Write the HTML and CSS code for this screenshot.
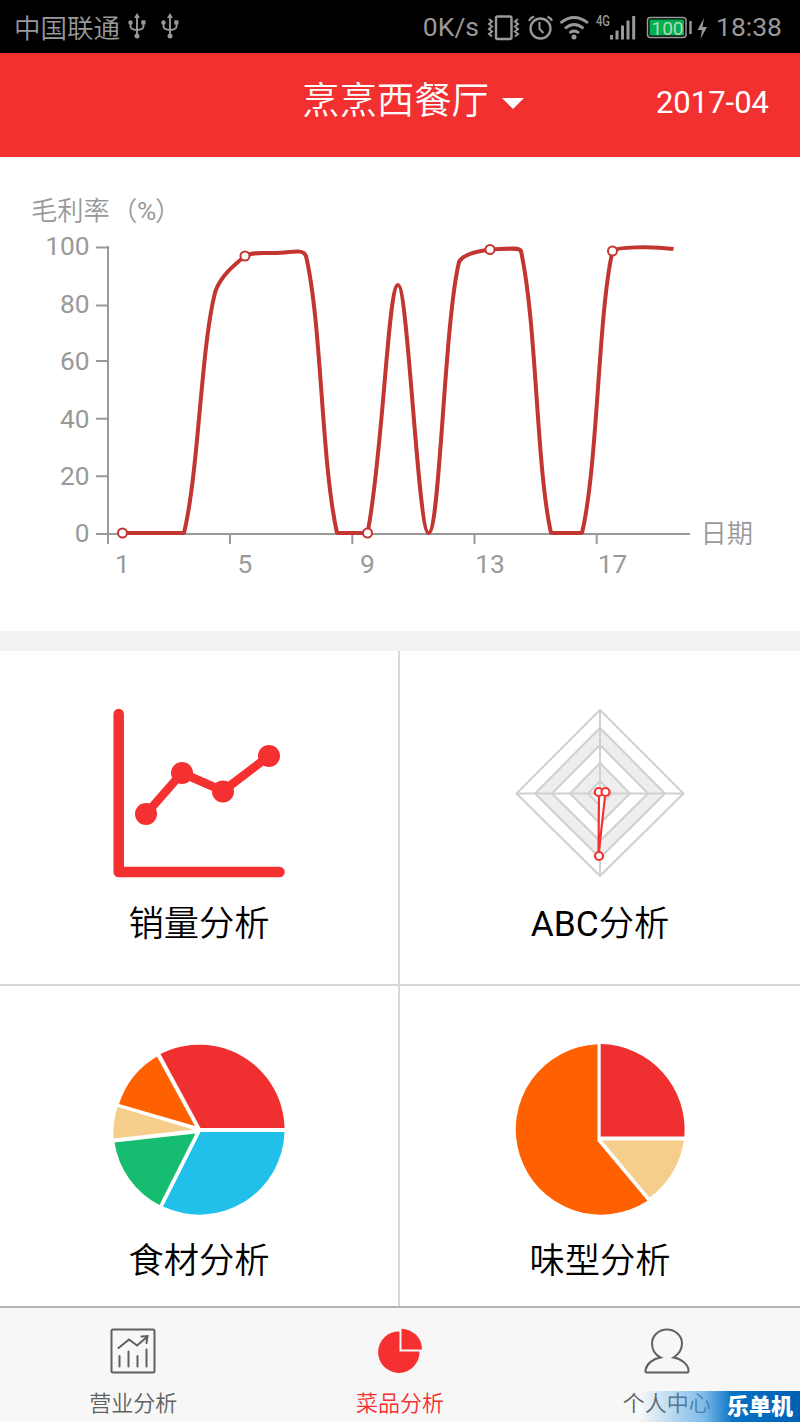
FILE: index.html
```html
<!DOCTYPE html>
<html lang="zh-CN">
<head>
<meta charset="UTF-8">
<meta name="viewport" content="width=device-width, initial-scale=1.0">
<title>菜品分析</title>
<link rel="stylesheet" href="styles.css">
</head>
<body>

<div class="status-bar">
    <span class="carrier">中国联通</span>
    <svg class="usb" width="18" height="27" viewBox="0 0 18 27">
        <path d="M9 3v21M2.500 10v3.500q0 3 6.500 3.500q6.500-.5 6.500-3.500V10" fill="none" stroke="#999" stroke-width="1.900"/>
        <path d="M9 0l3 5H6z" fill="#999"/>
        <circle cx="2.500" cy="9.500" r="2.200" fill="#999"/>
        <rect x="13.300" y="7.300" width="4.200" height="4.200" fill="#999"/>
        <circle cx="9" cy="23" r="2.500" fill="#999"/>
    </svg>
    <svg class="usb second" width="18" height="27" viewBox="0 0 18 27">
        <path d="M9 3v21M2.500 10v3.500q0 3 6.500 3.500q6.500-.5 6.500-3.500V10" fill="none" stroke="#999" stroke-width="1.900"/>
        <path d="M9 0l3 5H6z" fill="#999"/>
        <circle cx="2.500" cy="9.500" r="2.200" fill="#999"/>
        <rect x="13.300" y="7.300" width="4.200" height="4.200" fill="#999"/>
        <circle cx="9" cy="23" r="2.500" fill="#999"/>
    </svg>
    <span class="speed latin">0K/s</span>
    <svg class="status-icons" width="224" height="32" viewBox="488 10 224 32">
        <g fill="none" stroke="#999" stroke-width="2">
            <!-- vibrate -->
            <rect x="498" y="15.500" width="15.500" height="22.500" rx="1.500" stroke-width="2.400"/>
            <path d="M491 18l3 2.500-3 2.500 3 2.500-3 2.500 3 2.500-3 2.500 3 2.500M520 18l-3 2.500 3 2.500-3 2.500 3 2.500-3 2.500 3 2.500-3 2.500"/>
            <!-- alarm -->
            <circle cx="542.500" cy="27.500" r="10" stroke-width="2.300"/>
            <path d="M541.500 21v7l4 4M531 20q1-3 5-4.500M549.500 15.500q3.500 1.500 4.500 4.500"/>
            <!-- wifi -->
            <path d="M562.500 22q13.500-11 27.500 0M567 27.500q9-8 18.500 0M571.500 32q4.500-4 9.500 0" stroke-width="2.800"/>
            <!-- signal -->
            <path d="M613.500 34v4.500M619 29.500v9M624.500 24.500v14M630 19.500v19M635.700 15v23.500" stroke-width="3"/>
            <rect x="649.500" y="16.500" width="38.500" height="20" rx="3" stroke-width="1.500"/>
            <path d="M692.500 20v13" stroke-width="2.400"/>
        </g>
        <circle cx="576" cy="36" r="2.500" fill="#999"/>
        <rect x="651.500" y="18.500" width="34.500" height="16" rx="1" fill="#00b050"/>
        <path d="M706 17l-6.500 12h4.500l-1.500 9 6.500-12h-4.500z" fill="#999"/>
        <text class="net-text" x="598" y="25" textLength="14" lengthAdjust="spacingAndGlyphs">4G</text>
        <text class="battery-text" x="669.500" y="34" text-anchor="middle">100</text>
    </svg>
    <span class="time latin">18:38</span>
</div>

<div class="header">
    <div class="shop">烹烹西餐厅<span class="arrow"></span></div>
    <div class="month latin">2017-04</div>
</div>

<div class="chart">
    <svg width="800" height="474" viewBox="0 157 800 474">
        <g class="axis">
            <path d="M108 246v298M96 534h594"/>
            <path d="M96 247.500h12M96 305.500h12M96 361h12M96 418.700h12M96 476.300h12"/>
            <path d="M230 534v10M352.300 534v10M474.500 534v10M596.700 534v10"/>
        </g>
        <g class="axis-text">
            <text x="31" y="220">毛利率<tspan x="111">（</tspan><tspan class="latin" x="137">%</tspan><tspan x="155">）</tspan></text>
            <text x="700.500" y="542.500">日期</text>
        </g>
        <g class="axis-text latin" text-anchor="end">
            <text x="89.500" y="255">100</text>
            <text x="89.500" y="312.500">80</text>
            <text x="89.500" y="370">60</text>
            <text x="89.500" y="427.500">40</text>
            <text x="89.500" y="485">20</text>
            <text x="89.500" y="542">0</text>
        </g>
        <g class="axis-text latin" text-anchor="middle">
            <text x="122.500" y="573">1</text>
            <text x="245" y="573">5</text>
            <text x="367.500" y="573">9</text>
            <text x="490" y="573">13</text>
            <text x="612.500" y="573">17</text>
        </g>
        <path class="line" d="M122.500 533H184C199 470 201 345 215.500 291C221 276 233 266 245 256C251 252 260 253.500 275.500 253C291 253 303 248 306 256C322 325 321 460 337 533H367.500C383 455 388 285 398 285C408 285 418 533 428.500 533C440 533 444 325 459 262C463 254 478 251 490 249.500C505 249 519 247 521 251C537 325 536 465 551 533H582C598 465 598 315 612.500 251C617 247 650 246 673.500 249"/>
        <g class="dots">
            <circle cx="122.500" cy="533" r="4.500"/>
            <circle cx="245" cy="256" r="4.500"/>
            <circle cx="367.500" cy="533" r="4.500"/>
            <circle cx="490" cy="249.500" r="4.500"/>
            <circle cx="612.500" cy="251" r="4.500"/>
        </g>
    </svg>
</div>

<div class="menu">
    <div class="item">
        <svg width="176" height="176" viewBox="111 705 176 176">
            <path d="M118.700 714v158H279.500" fill="none" stroke="#f53030" stroke-width="10.500" stroke-linecap="round" stroke-linejoin="round"/>
            <path d="M146 814l36-41 41 18 46-35" fill="none" stroke="#f53030" stroke-width="8.500"/>
            <g fill="#f53030">
                <circle cx="146" cy="814" r="11"/>
                <circle cx="182" cy="773" r="11"/>
                <circle cx="223" cy="791.500" r="11"/>
                <circle cx="269" cy="756" r="11"/>
            </g>
        </svg>
        <p>销量分析</p>
    </div>
    <div class="item">
        <svg width="176" height="176" viewBox="512 705 176 176">
            <g stroke="#d0d0d0" stroke-width="2">
                <path d="M600 710l83.500 83.500L600 876l-83.500-82.500z" fill="#fff"/>
                <path d="M600 728l65 65.500-65 64.500-65-64.500z" fill="#eee"/>
                <path d="M600 745l48 48.500-48 47.500-48-47.500z" fill="#fff"/>
                <path d="M600 763l30 30.500-30 30-30-30z" fill="#eee"/>
                <path d="M600 781l12 12.500-12 12-12-12z" fill="#fff"/>
                <path d="M600 710v166M516.500 793.500h167"/>
            </g>
            <g fill="#fff" stroke="#f53030" stroke-width="2.200">
                <path d="M599 792l-.5 63.500L605.500 792"/>
                <circle cx="598.700" cy="792" r="4"/>
                <circle cx="605.500" cy="792" r="4"/>
                <circle cx="599" cy="856" r="4"/>
            </g>
        </svg>
        <p><span class="latin">ABC</span>分析</p>
    </div>
    <div class="item">
        <svg width="176" height="176" viewBox="111 1042 176 176">
            <path d="M200.500 1128H284.500A85.200 85.200 0 0 0 160.500 1054z" fill="#f03030"/>
            <path d="M195 1126L119 1104A86 86 0 0 1 157 1056.500z" fill="#ff6000"/>
            <path d="M193 1129.500L117.500 1107A88 88 0 0 0 113.500 1138.500z" fill="#f6ce8c"/>
            <path d="M195.500 1133.500L114.500 1142.500A85 85 0 0 0 159.500 1205z" fill="#16bc70"/>
            <path d="M200.500 1132H284.500A85.200 85.200 0 0 1 163 1206.500z" fill="#20c0ea"/>
        </svg>
        <p>食材分析</p>
    </div>
    <div class="item">
        <svg width="176" height="176" viewBox="512 1042 176 176">
            <path d="M597.500 1044.300A85.200 85.200 0 1 0 647.500 1200.800L597.500 1141z" fill="#ff6000"/>
            <path d="M600.700 1044V1136.500H684.300A85.500 85.500 0 0 0 600.700 1044z" fill="#f03030"/>
            <path d="M602 1140.500H683.800A85 85 0 0 1 649.500 1197.500z" fill="#f6ce8c"/>
        </svg>
        <p>味型分析</p>
    </div>
</div>

<div class="tabs">
    <div class="tab">
        <svg width="46" height="46" viewBox="0 0 46 46" fill="none" stroke="#606060" stroke-width="2">
            <rect x="1.500" y="1.500" width="43" height="43" rx="1.500"/>
            <path d="M8.500 20l10.500-8.500 8 6L37 9M31.500 8.500l6-.5-1 7M9.500 28v10.500M18.500 23.500v15M27.500 28v10.500M36.500 21.500v17" stroke-linecap="round"/>
        </svg>
        <span>营业分析</span>
    </div>
    <div class="tab active">
        <svg width="46" height="46" viewBox="0 0 46 46" fill="#f53030">
            <path d="M22.500 3.500A20.700 20.700 0 1 0 42.500 23.500H22.500z"/>
            <path d="M24.500 .8A20.500 20.500 0 0 1 45 21.500H24.500z"/>
        </svg>
        <span>菜品分析</span>
    </div>
    <div class="tab">
        <svg width="46" height="46" viewBox="0 0 46 46" fill="none" stroke="#606060" stroke-width="2">
            <path d="M16.500 29.500C10 26 8 20.500 8 15.500C8 7.500 15 1.500 23 1.500S38 7.500 38 15.500C38 20.500 35 26 29.500 29.500C37 30.500 44 36.500 44.500 42Q44.700 44.500 43 44.500H3Q1 44.500 1.500 42C2.500 36 9 30.500 16.500 29.500z"/>
        </svg>
        <span>个人中心</span>
    </div>
    <div class="badge">乐单机</div>
</div>

</body>
</html>
```
FILE: styles.css
```css
body {
    margin: 0;
    background-color: #fff;
    font-family: Roboto, "Noto Sans CJK SC", sans-serif;
    font-weight: 350;
}
.latin {
    font-weight: 400;
}
.status-bar {
    display: flex;
    align-items: center;
    box-sizing: border-box;
    height: 53px;
    padding: 0 18px 0 14px;
    background-color: #000;
    color: #999;
    font-size: 26.5px;
    white-space: nowrap;
}
.usb {
    margin-left: 8px;
}
.usb.second {
    margin-left: 15px;
}
.speed {
    margin-left: auto;
}
.status-icons {
    margin-left: 7px;
    margin-right: 6px;
}
.net-text {
    font-size: 14px;
    font-weight: 500;
    fill: #999;
}
.battery-text {
    font-size: 19px;
    font-weight: 400;
    fill: #b5d8b5;
}
.header {
    display: grid;
    grid-template-columns: 1fr auto 1fr;
    align-items: center;
    box-sizing: border-box;
    height: 104px;
    padding: 0 31px 8px;
    background-color: #f23030;
    color: #fff;
}
.shop {
    grid-column: 2;
    display: flex;
    align-items: center;
    margin-left: 26px;
    font-size: 37.4px;
    line-height: 54px;
}
.arrow {
    margin: 5px 0 0 13px;
    border: 11px solid transparent;
    border-top-color: #fff;
    border-bottom: 0;
}
.month {
    padding-top: 3px;
    font-size: 31px;
    text-align: right;
}
.chart {
    height: 474px;
    border-bottom: 20px solid #f2f2f2;
}
.chart svg {
    display: block;
}
.axis {
    fill: none;
    stroke: #999;
    stroke-width: 2;
}
.axis-text {
    font-size: 26.3px;
    fill: #999;
}
.line {
    fill: none;
    stroke: #c23531;
    stroke-width: 4;
    stroke-linejoin: bevel;
}
.dots {
    fill: #fff;
    stroke: #c23531;
    stroke-width: 2;
}
.menu {
    display: grid;
    grid-template-columns: 400px 400px;
    grid-template-rows: 335px 320px;
}
.item {
    display: flex;
    flex-direction: column;
    align-items: center;
    box-sizing: border-box;
    padding-top: 54px;
}
.item:nth-child(odd) {
    border-right: 2px solid #d8d8d8;
}
.item:nth-child(-n+2) {
    border-bottom: 2px solid #d8d8d8;
}
.item:nth-child(n+3) {
    padding-top: 56px;
}
.item p {
    margin: 18px 0 0;
    font-size: 35.3px;
    line-height: 50px;
    color: #000;
}
.tabs {
    position: relative;
    display: grid;
    grid-template-columns: repeat(3, 1fr);
    box-sizing: border-box;
    height: 116px;
    border-top: 2px solid #b2b2b2;
    background-color: #f7f7f7;
}
.tab {
    display: flex;
    flex-direction: column;
    align-items: center;
    padding-top: 20px;
    font-size: 22px;
    color: #606060;
}
.tab span {
    margin-top: 14px;
    line-height: 32px;
}
.active {
    color: #f53030;
}
.badge {
    position: absolute;
    right: 0;
    bottom: 0;
    box-sizing: border-box;
    width: 160px;
    height: 31px;
    padding-right: 7px;
    background: linear-gradient(to right, rgba(60, 160, 230, 0), rgba(60, 155, 225, 0.65) 40%, #0872c4 58%, #0060b4);
    color: #fff;
    font-size: 22px;
    font-weight: 900;
    line-height: 31px;
    text-align: right;
}
```
